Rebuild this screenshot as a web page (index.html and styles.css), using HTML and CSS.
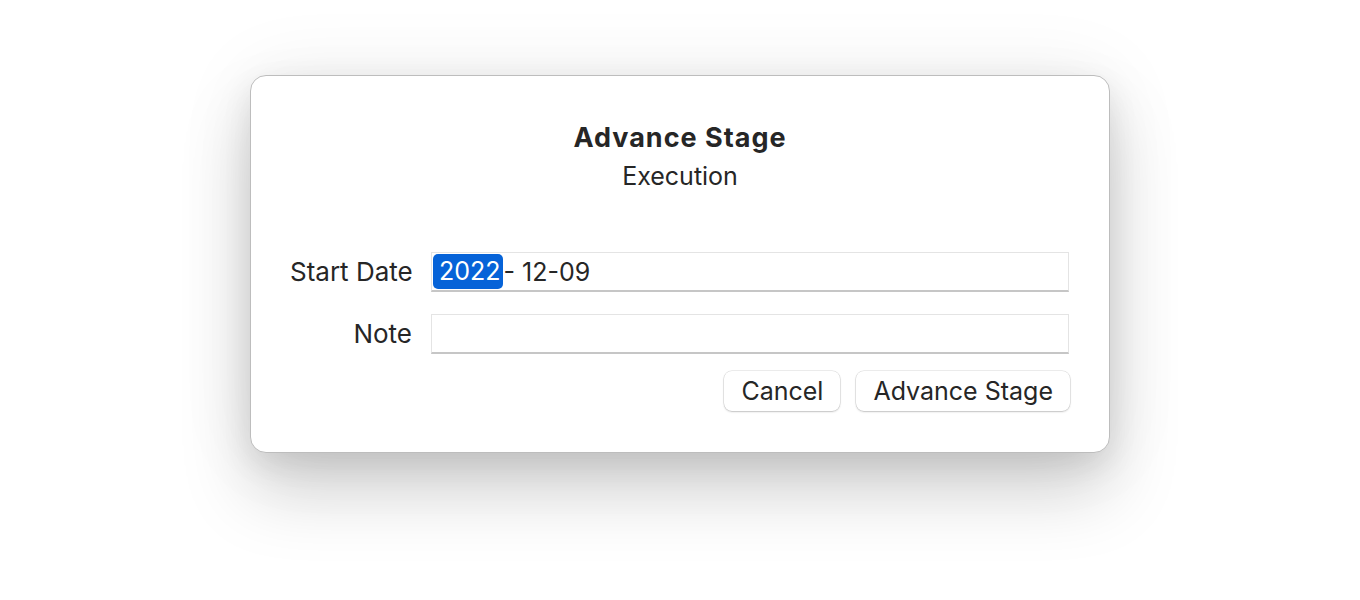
FILE: index.html
```html
<!DOCTYPE html>
<html lang="en">
<head>
<meta charset="utf-8">
<title>Advance Stage</title>
<link rel="stylesheet" href="styles.css">
</head>
<body>
<div class="page">
  <div class="dialog">
    <div class="header">
      <div class="title">Advance Stage</div>
      <div class="subtitle">Execution</div>
    </div>
    <div class="form">
      <label class="label">Start Date</label>
      <div class="field"><span class="sel">2022</span><span class="rest">- 12-09</span></div>
      <label class="label">Note</label>
      <div class="field"></div>
    </div>
    <div class="actions">
      <button class="btn">Cancel</button>
      <button class="btn">Advance Stage</button>
    </div>
  </div>
</div>
</body>
</html>
```
FILE: styles.css
```css
html, body {
  margin: 0;
  padding: 0;
  background: #ffffff;
}
body {
  font-family: Inter, "Noto Sans", "Liberation Sans", sans-serif;
  color: #262626;
  width: 1360px;
  height: 600px;
  overflow: hidden;
}
.page {
  display: flex;
  justify-content: center;
  padding-top: 75px;
}
.dialog {
  box-sizing: border-box;
  width: 860px;
  height: 378px;
  background: #ffffff;
  border: 1px solid #bdbdbd;
  border-radius: 16px;
  box-shadow: 0 40px 70px rgba(0, 0, 0, 0.17), 0 10px 30px rgba(0, 0, 0, 0.08), 0 0 80px rgba(0, 0, 0, 0.07);
  padding: 46px 39px 0 39px;
  display: flex;
  flex-direction: column;
}
.header {
  display: flex;
  flex-direction: column;
  align-items: center;
}
.title {
  font-size: 27px;
  font-weight: 700;
  letter-spacing: 1px;
  line-height: 32px;
}
.subtitle {
  font-size: 25px;
  line-height: 30px;
  margin-top: 7px;
}
.form {
  margin-top: 61px;
  display: grid;
  grid-template-columns: 122px 1fr;
  column-gap: 19px;
  row-gap: 22px;
  align-items: center;
}
.label {
  font-size: 26px;
  text-align: right;
  line-height: 30px;
  white-space: nowrap;
}
.field {
  box-sizing: border-box;
  height: 40px;
  border: 1px solid #e4e4e4;
  border-bottom: 2px solid #c6c6c6;
  background: #fff;
  display: flex;
  align-items: center;
  padding-left: 1px;
  font-size: 25px;
  margin-right: 1px;
}
.sel {
  background: #0663d8;
  color: #fff;
  border-radius: 5px;
  height: 35px;
  line-height: 35px;
  padding: 0 2px 0 6px;
}
.rest {
  padding-left: 1px;
}
.actions {
  margin-top: 17px;
  display: flex;
  justify-content: flex-end;
  gap: 16px;
}
.btn {
  font-family: inherit;
  font-size: 25px;
  color: #262626;
  background: #fff;
  height: 40px;
  padding: 0 17px;
  border: none;
  border-radius: 8px;
  box-shadow: 0 0 0 0.5px rgba(0, 0, 0, 0.14), 0 1px 2px rgba(0, 0, 0, 0.18);
}
```
